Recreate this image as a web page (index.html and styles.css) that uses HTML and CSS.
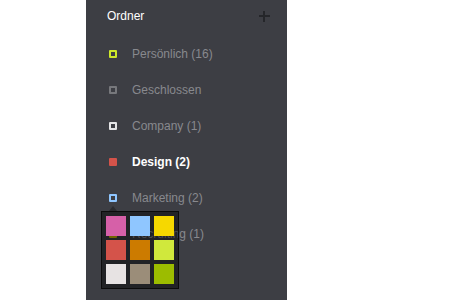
FILE: index.html
```html
<!DOCTYPE html>
<html lang="de">
<head>
    <meta charset="UTF-8">
    <meta name="viewport" content="width=device-width, initial-scale=1.0">
    <title>Ordner</title>
    <link rel="stylesheet" href="styles.css">
</head>
<body>
    <div class="sidebar">
        <div class="sidebar-head">
            <span class="title">Ordner</span>
            <span class="add"></span>
        </div>
        <ul class="folders">
            <li class="folder"><span class="dot dot-lime"></span>Persönlich (16)</li>
            <li class="folder"><span class="dot dot-gray"></span>Geschlossen</li>
            <li class="folder"><span class="dot dot-white"></span>Company (1)</li>
            <li class="folder active"><span class="dot dot-red"></span>Design (2)</li>
            <li class="folder">
                <span class="dot dot-blue"></span>Marketing (2)
                <div class="palette">
                    <span class="swatch" style="background:#d660a8"></span>
                    <span class="swatch" style="background:#8fc6ff"></span>
                    <span class="swatch" style="background:#f6d800"></span>
                    <span class="swatch" style="background:#d4534a"></span>
                    <span class="swatch" style="background:#cc7b00"></span>
                    <span class="swatch" style="background:#d0e83c"></span>
                    <span class="swatch" style="background:#e7e3e3"></span>
                    <span class="swatch" style="background:#9b8d79"></span>
                    <span class="swatch" style="background:#9cbc00"></span>
                </div>
            </li>
            <li class="folder"><span class="dot dot-olive"></span>Recruiting (1)</li>
        </ul>
    </div>
</body>
</html>
```

FILE: styles.css
```css
body {
    margin: 0;
    background-color: #fff;
    font-family: "Liberation Sans", Arial, sans-serif;
    overflow: hidden;
}
.sidebar {
    margin-left: 86px;
    width: 201px;
    height: 300px;
    background-color: #3d3e44;
    padding: 0 17px 0 21px;
    box-sizing: border-box;
}
.sidebar-head {
    height: 32px;
    display: flex;
    align-items: center;
    justify-content: space-between;
}
.title {
    color: #fff;
    font-size: 12px;
}
.add {
    position: relative;
    width: 11px;
    height: 11px;
    margin-top: 1px;
}
.add::before, .add::after {
    content: "";
    position: absolute;
    background-color: #25262a;
}
.add::before {
    left: 0;
    top: 4px;
    width: 11px;
    height: 2px;
}
.add::after {
    left: 4px;
    top: 0;
    width: 2px;
    height: 11px;
}
.folders {
    list-style: none;
    margin: 4px 0 0;
    padding: 0;
}
.folder {
    position: relative;
    height: 36px;
    display: flex;
    align-items: center;
    color: #88898e;
    font-size: 12px;
}
.folder.active {
    color: #fff;
    font-weight: bold;
}
.dot {
    width: 8px;
    height: 8px;
    box-sizing: border-box;
    border: 2px solid;
    border-radius: 1px;
    margin: 0 15px 0 2px;
    background-color: #3d3e44;
}
.dot-lime { border-color: #cde82a; }
.dot-gray { border-color: #77787c; }
.dot-white { border-color: #e4e4e6; }
.dot-red { border-color: #d4534a; background-color: #d4534a; }
.dot-blue { border-color: #8fc6ff; }
.dot-olive { border-color: #c8b400; }
.palette {
    position: absolute;
    left: -6px;
    top: 31px;
    display: grid;
    grid-template-columns: repeat(3, 20px);
    gap: 4px;
    padding: 4px;
    background-color: rgba(0, 0, 0, 0.43);
    border: 1px solid #0c0c0c;
    z-index: 10;
}
.palette::before {
    content: "";
    position: absolute;
    left: 7px;
    top: -6px;
    border-left: 4px solid transparent;
    border-right: 4px solid transparent;
    border-bottom: 5px solid rgba(0, 0, 0, 0.3);
}
.swatch {
    width: 20px;
    height: 20px;
}
```
